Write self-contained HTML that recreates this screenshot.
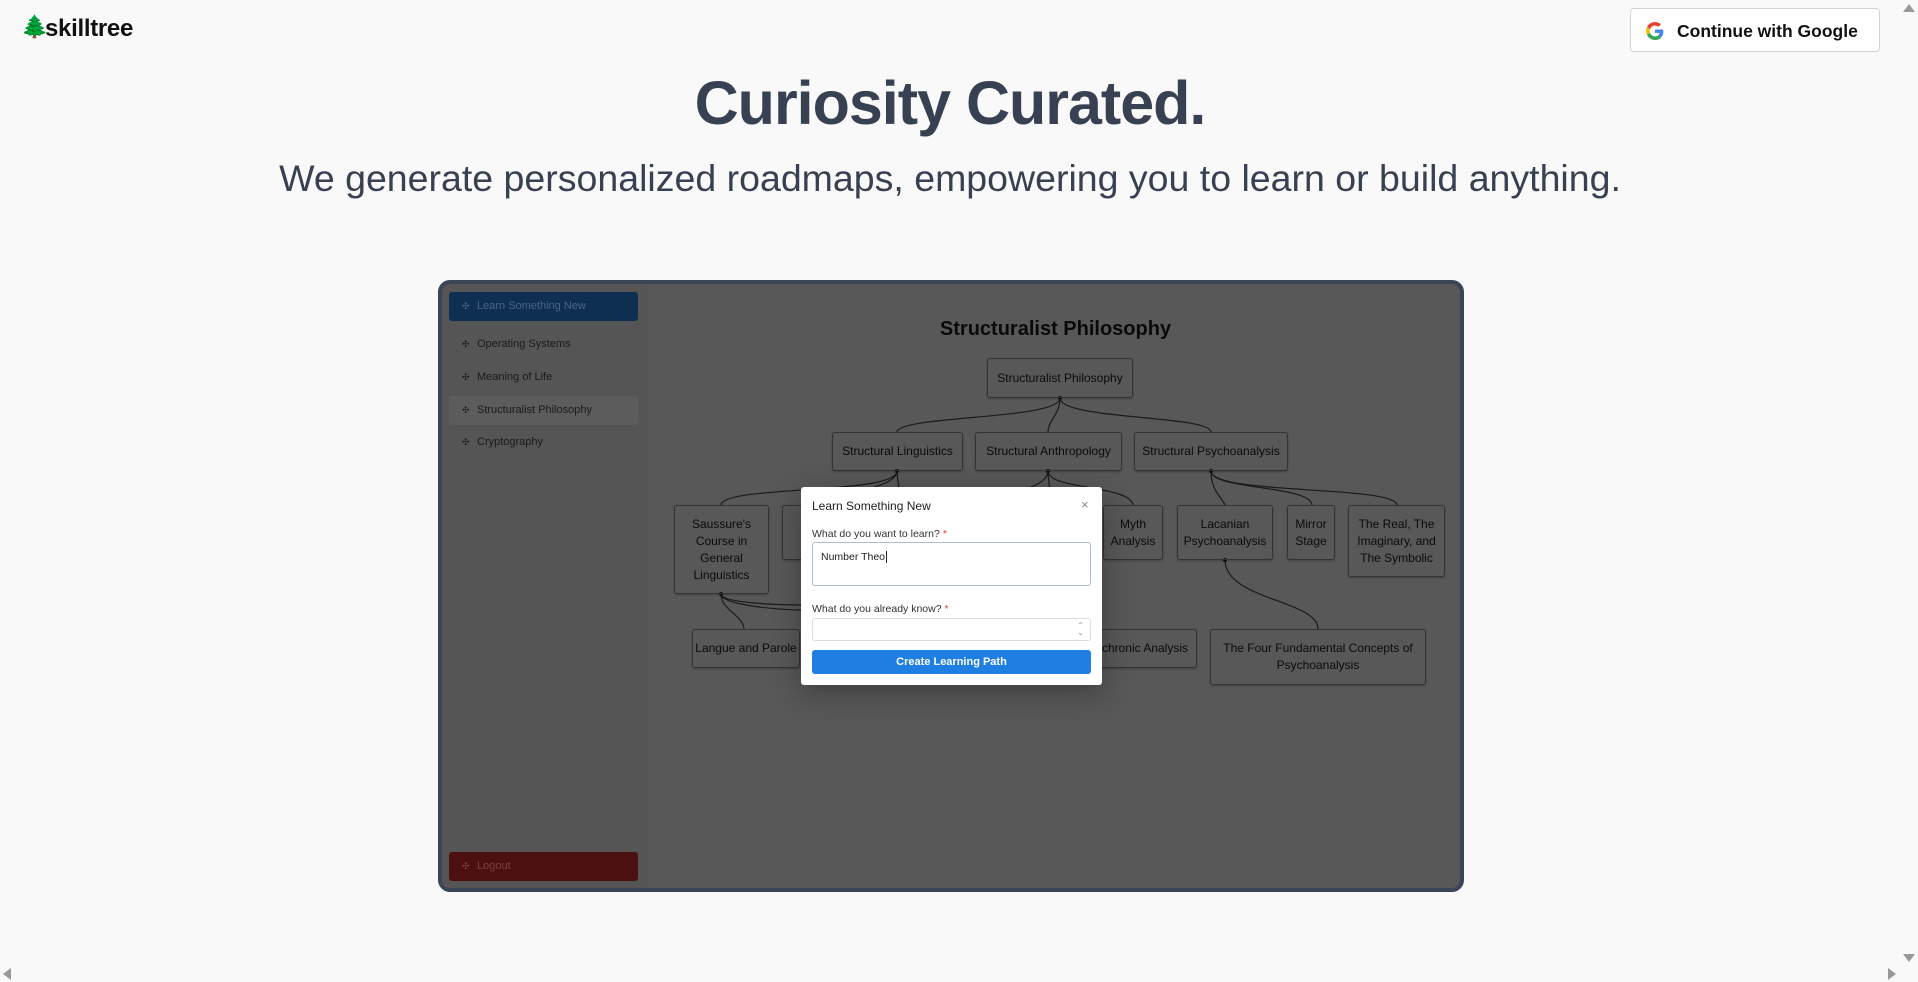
<!DOCTYPE html>
<html><head><meta charset="utf-8">
<style>
*{box-sizing:border-box;margin:0;padding:0}
body{width:1918px;height:982px;overflow:hidden;background:#f9f9f9;font-family:"Liberation Sans",sans-serif;position:relative;color:#374151}
.abs{position:absolute}
.logo{left:45px;top:15px;font-size:24px;color:#111;font-weight:bold;letter-spacing:-0.3px}
.gbtn{left:1630px;top:8px;width:250px;height:44px;border:1px solid #d1d5db;border-radius:4px;background:#fff}
.gbtn span{position:absolute;left:46px;top:12px;font-size:17.5px;font-weight:bold;color:#111}
h1{position:absolute;left:0;width:1900px;text-align:center;top:68px;font-size:61px;font-weight:bold;color:#374151;letter-spacing:-1px}
.sub{left:0;width:1900px;text-align:center;top:157px;font-size:37.5px;color:#374151}
.frame{left:438px;top:280px;width:1026px;height:612px;border:4px solid #3b4558;border-radius:12px;background:#585858;overflow:hidden}
.side{left:0;top:0;width:205px;height:100%;background:#555;border-right:1px solid #525252}
.item{position:absolute;left:7px;width:189px;height:29px;font-size:11px;color:#1a1a1a;padding-left:28px;line-height:29px}
.item:before{content:"✣";position:absolute;left:13px;font-size:9px}
.node{position:absolute;border:1px solid #333;border-radius:3px;font-size:12px;color:#0a0a0a;text-align:center;display:flex;align-items:center;justify-content:center;line-height:17px;box-shadow:0 1px 2px rgba(0,0,0,.25)}
.modal{left:801px;top:487px;width:301px;height:198px;background:#fff;border-radius:3px;box-shadow:0 8px 30px rgba(0,0,0,.3)}
.lbl{position:absolute;left:11px;font-size:10.5px;color:#333}
.lbl b{color:#e33;font-weight:normal}
</style></head><body>
<div class="abs" style="left:21px;top:14px;font-size:22px">🌲</div>
<div class="abs logo">skilltree</div>
<div class="abs gbtn">
<svg class="abs" style="left:15px;top:13px" width="18" height="18" viewBox="0 0 48 48"><path fill="#EA4335" d="M24 9.5c3.5 0 6.6 1.2 9.1 3.6l6.8-6.8C35.8 2.4 30.3 0 24 0 14.6 0 6.6 5.4 2.7 13.300l7.9 6.1C12.5 13.6 17.8 9.5 24 9.5z"/><path fill="#4285F4" d="M46.1 24.5c0-1.6-.1-3.1-.4-4.5H24v9h12.4c-.5 2.9-2.2 5.3-4.6 6.9l7.7 6c4.5-4.2 7.1-10.3 6.600-17.4z"/><path fill="#FBBC05" d="M10.5 28.6c-.5-1.4-.8-3-.8-4.6s.3-3.2.8-4.6l-7.9-6.1C1 16.6 0 20.2 0 24s1 7.4 2.7 10.7l7.8-6.1z"/><path fill="#34A853" d="M24 48c6.5 0 11.9-2.1 15.9-5.8l-7.7-6c-2.1 1.4-4.9 2.3-8.2 2.3-6.2 0-11.5-4.2-13.4-9.9l-7.9 6.1C6.6 42.6 14.6 48 24 48z"/></svg>
<span>Continue with Google</span></div>
<div class="abs" style="left:1903px;top:4px;width:0;height:0;border-left:6px solid transparent;border-right:6px solid transparent;border-bottom:8px solid #999"></div>
<div class="abs" style="left:1903px;top:954px;width:0;height:0;border-left:6px solid transparent;border-right:6px solid transparent;border-top:8px solid #999"></div>
<div class="abs" style="left:3px;top:968px;width:0;height:0;border-top:6px solid transparent;border-bottom:6px solid transparent;border-right:8px solid #999"></div>
<div class="abs" style="left:1888px;top:968px;width:0;height:0;border-top:6px solid transparent;border-bottom:6px solid transparent;border-left:8px solid #999"></div>
<h1>Curiosity Curated.</h1>
<div class="abs sub">We generate personalized roadmaps, empowering you to learn or build anything.</div>

<div class="abs frame">
 <div class="abs side">
  <div class="item" style="top:8px;background:#0f2f52;border-radius:3px;color:#4a6585">Learn Something New</div>
  <div class="item" style="top:46px">Operating Systems</div>
  <div class="item" style="top:79px">Meaning of Life</div>
  <div class="item" style="top:112px;background:#5c5c5c;border-radius:3px">Structuralist Philosophy</div>
  <div class="item" style="top:144px">Cryptography</div>
  <div class="item" style="top:568px;background:#4d1010;border-radius:3px;color:#7a4040">Logout</div>
 </div>
 <div class="abs" style="left:205px;width:817px;top:34px;text-align:center;font-size:20px;color:#0a0a0a;font-weight:bold">Structuralist Philosophy</div>
 <svg class="abs" style="left:0;top:0" width="1018" height="604" fill="none" stroke="#1a1a1a" stroke-width="1.2">
  <g transform="translate(-442,-284)">
  <path d="M1060 398 C1060 420 900 415 897 432"/>
  <path d="M1060 398 C1060 415 1048 420 1048 432"/>
  <path d="M1060 398 C1060 420 1210 415 1211 432"/>
  <path d="M897 471 C897 495 722 485 721 505"/>
  <path d="M897 471 C897 485 860 490 820 505"/>
  <path d="M897 471 C897 480 900 490 900 500"/>
  <path d="M1048 471 C1048 485 1020 490 1000 500"/>
  <path d="M1048 471 C1048 480 1050 490 1052 500"/>
  <path d="M1048 471 C1048 490 1130 485 1133 505"/>
  <path d="M1211 471 C1211 490 1220 495 1225 505"/>
  <path d="M1211 471 C1211 490 1310 485 1312 505"/>
  <path d="M1211 471 C1211 495 1395 485 1397 505"/>
  <path d="M721 594 C721 610 743 615 744 629"/>
  <path d="M721 594 C721 605 780 610 801 610"/>
  <path d="M721 594 C721 603 780 605 801 605"/>
  <path d="M1225 560 C1225 600 1318 600 1318 629"/>
  </g>
  <g fill="#111" stroke="none" transform="translate(-442,-284)">
  <circle cx="1060" cy="398" r="2"/><circle cx="897" cy="471" r="2"/><circle cx="1048" cy="471" r="2"/><circle cx="1211" cy="471" r="2"/><circle cx="721" cy="594" r="2"/><circle cx="1225" cy="560" r="2"/>
  </g>
 </svg>
 <div class="node" style="left:545px;top:74px;width:146px;height:40px">Structuralist Philosophy</div>
 <div class="node" style="left:390px;top:148px;width:131px;height:39px">Structural Linguistics</div>
 <div class="node" style="left:533px;top:148px;width:147px;height:39px">Structural Anthropology</div>
 <div class="node" style="left:692px;top:148px;width:154px;height:39px">Structural Psychoanalysis</div>
 <div class="node" style="left:232px;top:221px;width:95px;height:89px">Saussure's<br>Course in<br>General<br>Linguistics</div>
 <div class="node" style="left:340px;top:221px;width:60px;height:55px"></div>
 <div class="node" style="left:661px;top:221px;width:60px;height:55px">Myth<br>Analysis</div>
 <div class="node" style="left:735px;top:221px;width:96px;height:55px">Lacanian<br>Psychoanalysis</div>
 <div class="node" style="left:845px;top:221px;width:48px;height:55px">Mirror<br>Stage</div>
 <div class="node" style="left:906px;top:221px;width:97px;height:72px">The Real, The<br>Imaginary, and<br>The Symbolic</div>
 <div class="node" style="left:250px;top:345px;width:108px;height:39px">Langue and Parole</div>
 <div class="node" style="left:610px;top:345px;width:145px;height:39px;justify-content:flex-end;padding-right:8px">Diachronic Analysis</div>
 <div class="node" style="left:768px;top:345px;width:216px;height:56px">The Four Fundamental Concepts of<br>Psychoanalysis</div>
</div>

<div class="abs modal">
 <div class="abs" style="left:11px;top:12px;font-size:12px;color:#222">Learn Something New</div>
 <div class="abs" style="left:280px;top:10px;font-size:13px;color:#888">×</div>
 <div class="lbl" style="top:41px">What do you want to learn? <b>*</b></div>
 <div class="abs" style="left:11px;top:55px;width:279px;height:44px;border:1px solid #a9bdd3;border-radius:3px;font-size:10.5px;color:#222;padding:8px 8px">Number Theo<span style="border-left:1px solid #222;margin-left:1px"></span></div>
 <div class="lbl" style="top:116px">What do you already know? <b>*</b></div>
 <div class="abs" style="left:11px;top:131px;width:279px;height:23px;border:1px solid #ddd;border-radius:3px"><span style="position:absolute;right:6px;top:3px;font-size:8px;color:#999;line-height:7px">⌃<br>⌄</span></div>
 <div class="abs" style="left:11px;top:163px;width:279px;height:24px;background:#1f7ee2;border-radius:3px;color:#fff;font-size:11px;font-weight:bold;text-align:center;line-height:24px">Create Learning Path</div>
</div>
</body></html>
